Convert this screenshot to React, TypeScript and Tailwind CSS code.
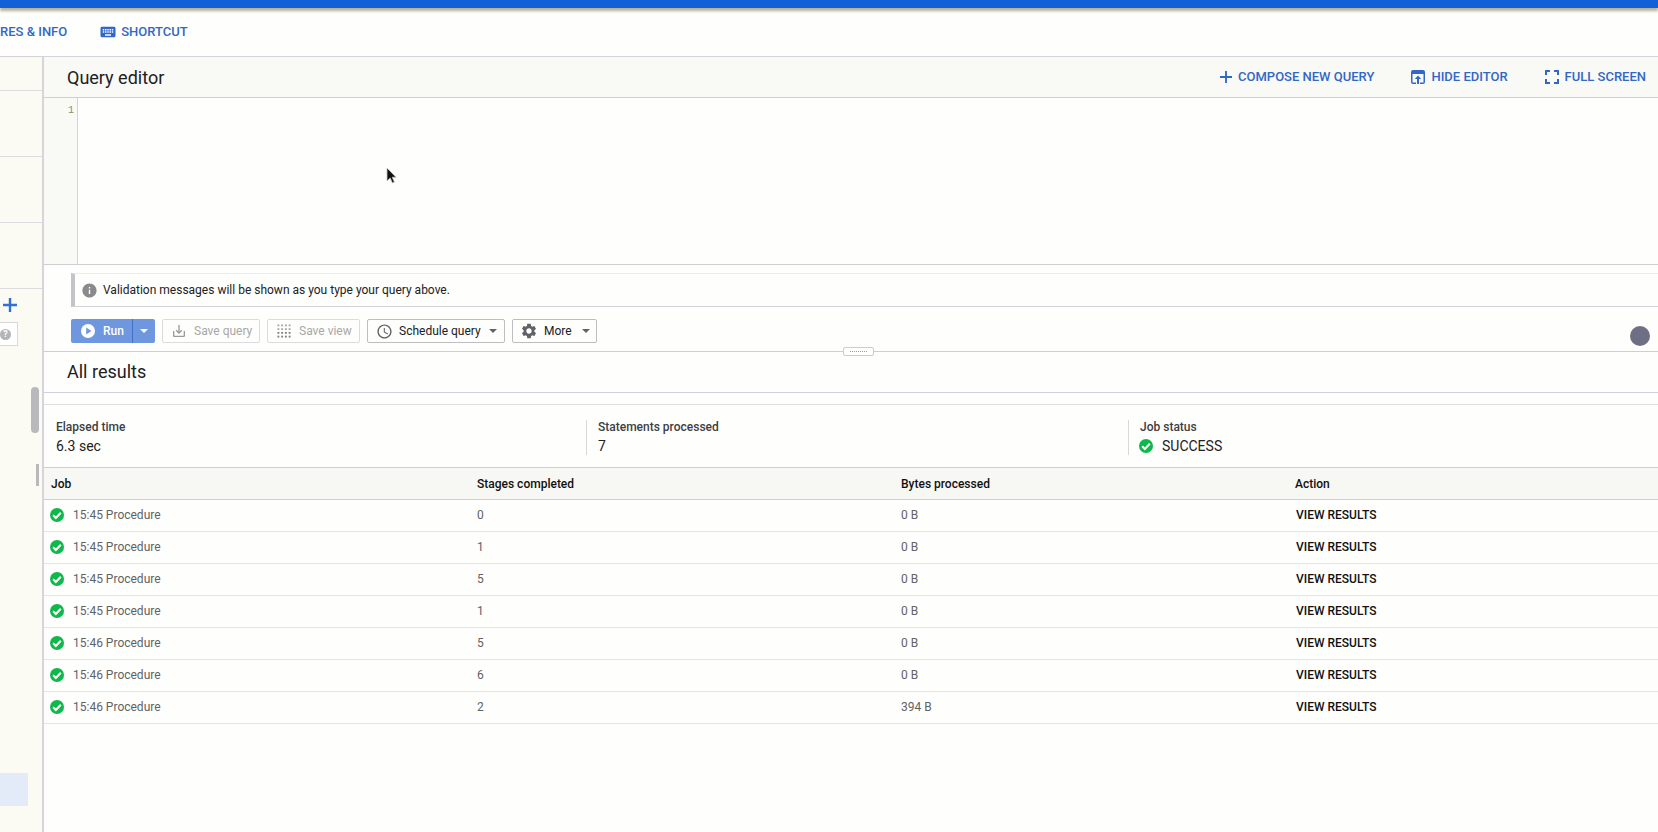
import React from "react";
import { MdAccessTime, MdInfo, MdKeyboard, MdSaveAlt, MdSettings } from "react-icons/md";

const rows = [
  ["15:45 Procedure", "0", "0 B"],
  ["15:45 Procedure", "1", "0 B"],
  ["15:45 Procedure", "5", "0 B"],
  ["15:45 Procedure", "1", "0 B"],
  ["15:46 Procedure", "5", "0 B"],
  ["15:46 Procedure", "6", "0 B"],
  ["15:46 Procedure", "2", "394 B"],
];

function Check({ className }: { className: string }) {
  return (
    <svg viewBox="0 0 24 24" className={className}>
      <circle cx="12" cy="12" r="12" fill="#0fb84a" />
      <path d="M5.5 12.5l4.500 4.500 8.500-9" fill="none" stroke="#fff" strokeWidth="3.6" />
    </svg>
  );
}

function Caret({ color }: { color: string }) {
  return (
    <svg viewBox="0 0 10 5" className="w-[8px] h-[4px]">
      <path d="M0 0h10L5 5z" fill={color} />
    </svg>
  );
}

function LinkAction({ icon, label }: { icon: React.ReactNode; label: string }) {
  return (
    <div className="flex items-center gap-[6px] text-[13px] font-medium text-[#3367c6]">
      {icon}
      <span>{label}</span>
    </div>
  );
}

function SaveViewIcon() {
  const cells = [];
  for (let r = 0; r < 4; r++) {
    for (let c = 0; c < 4; c++) {
      cells.push(<rect key={`${r}-${c}`} x={c * 4 + 0.5} y={r * 4 + 0.5} width="2" height="2" fill={r > 1 ? "#808080" : "#a8a8a8"} />);
    }
  }
  return (
    <svg viewBox="0 0 15 15" className="w-[14px] h-[14px]">
      {cells}
    </svg>
  );
}

export default function App() {
  return (
    <div className="w-[1658px] h-[832px] overflow-hidden bg-[#fefefc] flex flex-col font-['Roboto',sans-serif] text-[#202124]">
      <div className="h-[8px] shrink-0 bg-[#1160d8] shadow-[0_3px_3px_rgba(110,100,60,0.5)]" />
      <div className="h-[49px] shrink-0 flex items-center gap-[32px] border-b border-[#d4d4d8]">
        <span className="text-[13px] font-medium text-[#3367c6]">RES &amp; INFO</span>
        <div className="flex items-center gap-[4px] text-[13px] font-medium text-[#3367c6]">
          <MdKeyboard size={18} color="#3367c6" />
          <span>SHORTCUT</span>
        </div>
      </div>
      <div className="flex-1 flex min-h-0">
        <aside className="w-[44px] shrink-0 relative border-r-2 border-[#d6d6da] bg-[#fbfbf3] flex flex-col">
          <div className="h-[34px] border-b border-[#dcdce0]" />
          <div className="h-[66px] border-b border-[#dcdce0]" />
          <div className="h-[66px] border-b border-[#dcdce0]" />
          <div className="h-[66px] border-b border-[#dcdce0]" />
          <svg viewBox="0 0 14 14" className="absolute left-[3px] top-[241px] w-[14px] h-[14px]">
            <path d="M7 0v14M0 7h14" stroke="#2f6fd6" strokeWidth="2.4" />
          </svg>
          <div className="absolute left-0 top-[265px] w-[18px] h-[24px] bg-white border border-[#d8d8dc] border-l-0 flex items-center">
            <div className="w-[11px] h-[11px] rounded-full bg-[#b4b4b8] text-white text-[9px] font-bold leading-[11px] text-center">?</div>
          </div>
          <div className="absolute left-[31px] top-[330px] w-[8px] h-[46px] rounded bg-[#b9b9bd]" />
          <div className="absolute left-[36px] top-[407px] w-[3px] h-[22px] bg-[#b9b9bd]" />
          <div className="absolute left-0 top-[716px] w-[28px] h-[33px] bg-[#e3ebf8]" />
        </aside>
        <main className="flex-1 min-w-0 flex flex-col">
          <div className="h-[41px] shrink-0 flex items-center justify-between pl-[23px] pr-[12px] bg-[#f9f9f5] border-b border-[#cfcfd3]">
            <h2 className="text-[18px] text-[#202124]">Query editor</h2>
            <div className="flex items-center gap-[37px]">
              <LinkAction
                label="COMPOSE NEW QUERY"
                icon={
                  <svg viewBox="0 0 14 14" className="w-[12px] h-[12px]">
                    <path d="M7 0v14M0 7h14" stroke="#3367c6" strokeWidth="2.2" />
                  </svg>
                }
              />
              <LinkAction
                label="HIDE EDITOR"
                icon={
                  <svg viewBox="0 0 14 14" className="w-[14px] h-[14px]">
                    <path fillRule="evenodd" d="M2 0h10a2 2 0 012 2v10a2 2 0 01-2 2H9v-1.500h3.500V4h-11v8.500H5V14H2a2 2 0 01-2-2V2a2 2 0 012-2z" fill="#3367c6" />
                    <path d="M7 5.500L3.800 9h2.200v5h2V9h2.200z" fill="#3367c6" />
                  </svg>
                }
              />
              <LinkAction
                label="FULL SCREEN"
                icon={
                  <svg viewBox="0 0 14 14" className="w-[14px] h-[14px]">
                    <path d="M1 5V1h4M9 1h4v4M13 9v4H9M5 13H1V9" fill="none" stroke="#3367c6" strokeWidth="2" />
                  </svg>
                }
              />
            </div>
          </div>
          <div className="h-[167px] shrink-0 flex relative border-b border-[#cfcfd3]">
            <div className="w-[34px] shrink-0 bg-[#f9f9f5] border-r border-[#d4d4d8] pr-[3px] pt-[5px] text-right font-['Liberation_Mono',monospace] text-[10px] text-[#8d8d70]">
              1
            </div>
            <svg viewBox="0 0 12 18" className="absolute left-[342px] top-[69px] w-[12px] h-[18px]">
              <path d="M1 1v13l3.200-3 2.200 5 2-1-2.200-4.800H10z" fill="#111" stroke="#c4c4c4" strokeWidth="0.8" />
            </svg>
          </div>
          <div className="pl-[27px] pt-[8px] shrink-0">
            <div className="h-[34px] flex items-center gap-[5px] pl-[6px] border-l-[4px] border-l-[#c4c4c8] border-b border-b-[#d4d4d8] border-t border-t-[#ecece8]">
              <MdInfo size={17} color="#8a8a8e" />
              <span className="text-[12px] text-[#202124]">Validation messages will be shown as you type your query above.</span>
            </div>
          </div>
          <div className="h-[45px] shrink-0 flex gap-[7px] pl-[27px] pt-[12px] relative border-b border-[#cfcfd3]">
            <div className="h-[24px] w-[84px] rounded-[2px] bg-[#6f97e0] flex items-center text-white text-[12px] font-medium">
              <div className="flex-1 flex items-center gap-[8px] pl-[10px]">
                <svg viewBox="0 0 14 14" className="w-[14px] h-[14px]">
                  <circle cx="7" cy="7" r="7" fill="#fff" />
                  <path d="M5.200 3.600v6.800L10.400 7z" fill="#6f97e0" />
                </svg>
                <span>Run</span>
              </div>
              <div className="w-[23px] h-full border-l border-[#3f6fc8] flex items-center justify-center">
                <Caret color="#fff" />
              </div>
            </div>
            <div className="h-[24px] w-[98px] flex items-center gap-[7px] pl-[8px] border border-[#dcdce0] rounded-[2px] text-[12px] text-[#a8a8a8]">
              <MdSaveAlt size={16} color="#9a9a9a" />
              <span>Save query</span>
            </div>
            <div className="h-[24px] w-[93px] flex items-center gap-[8px] pl-[9px] border border-[#dcdce0] rounded-[2px] text-[12px] text-[#a8a8a8]">
              <SaveViewIcon />
              <span>Save view</span>
            </div>
            <div className="h-[24px] w-[138px] flex items-center gap-[6px] pl-[8px] border border-[#bdbdc2] rounded-[2px] text-[12px] text-[#202124]">
              <MdAccessTime size={17} color="#5f6368" />
              <span>Schedule query</span>
              <span className="ml-[2px] flex"><Caret color="#5f6368" /></span>
            </div>
            <div className="h-[24px] w-[85px] flex items-center gap-[6px] pl-[7px] border border-[#bdbdc2] rounded-[2px] text-[12px] text-[#202124]">
              <MdSettings size={18} color="#5f6368" />
              <span>More</span>
              <span className="ml-[4px] flex"><Caret color="#5f6368" /></span>
            </div>
            <div className="absolute right-[8px] top-[19px] w-[20px] h-[20px] rounded-full bg-[#6e6e85]" />
            <div className="absolute left-[799px] -bottom-[5px] w-[31px] h-[9px] rounded-[2px] bg-white border border-[#c9c9e0] flex items-center justify-center">
              <div className="w-[17px] border-t border-dotted border-[#9a9ab0]" />
            </div>
          </div>
          <div className="h-[41px] shrink-0 flex items-center pl-[23px] pb-[1px] border-b border-[#cfcfdf]">
            <h2 className="text-[18px]">All results</h2>
          </div>
          <div className="h-[12px] shrink-0 border-b border-[#e0e0e4]" />
          <div className="h-[62px] shrink-0 grid grid-cols-[530px_542px_1fr] items-center pl-[12px] pt-[3px]">
            <div className="h-[35px] flex flex-col justify-between">
              <span className="text-[12px] font-medium leading-[14px] text-[#3c4043]">Elapsed time</span>
              <span className="text-[14px] leading-[18px]">6.3 sec</span>
            </div>
            <div className="h-[35px] border-l border-[#d8d8dc] pl-[11px] flex flex-col justify-between">
              <span className="text-[12px] font-medium leading-[14px] text-[#3c4043]">Statements processed</span>
              <span className="text-[14px] leading-[18px]">7</span>
            </div>
            <div className="h-[35px] border-l border-[#d8d8dc] pl-[11px] flex flex-col justify-between">
              <span className="text-[12px] font-medium leading-[14px] text-[#3c4043]">Job status</span>
              <span className="flex items-center gap-[9px] text-[14px] leading-[18px] -ml-[1px]">
                <Check className="w-[14px] h-[14px]" />
                SUCCESS
              </span>
            </div>
          </div>
          <div className="h-[33px] shrink-0 grid grid-cols-[426px_424px_394px_1fr] items-center pl-[7px] bg-[#f7f7f3] border-y border-[#cfcfd3] text-[12px] font-medium text-[#111]">
            <span>Job</span>
            <span>Stages completed</span>
            <span>Bytes processed</span>
            <span>Action</span>
          </div>
          {rows.map((r, i) => (
            <div key={i} className="h-[32px] shrink-0 grid grid-cols-[426px_424px_394px_1fr] items-center pl-[6px] pb-[2px] border-b border-[#e4e4ec] text-[12px] text-[#5f6368]">
              <span className="flex items-center gap-[9px]">
                <Check className="w-[14px] h-[14px]" />
                {r[0]}
              </span>
              <span className="pl-[1px]">{r[1]}</span>
              <span className="pl-[1px]">{r[2]}</span>
              <span className="pl-[2px] text-[12px] font-medium text-[#111]">VIEW RESULTS</span>
            </div>
          ))}
        </main>
      </div>
    </div>
  );
}
